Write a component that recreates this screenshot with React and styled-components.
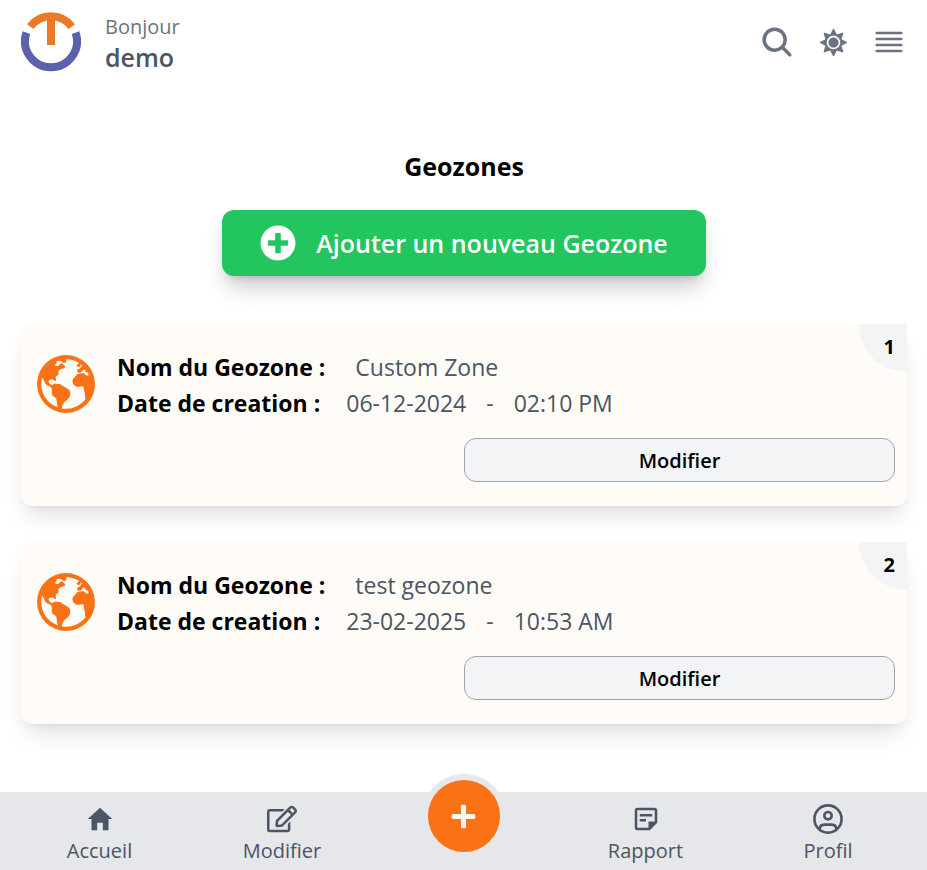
import React from "react";
import styled, { createGlobalStyle } from "styled-components";
import { IoEarth, IoSearch } from "react-icons/io5";
import { IoMdHome } from "react-icons/io";
import { FaSun, FaPlusCircle, FaPlus, FaRegEdit } from "react-icons/fa";
import { MdOutlineStickyNote2 } from "react-icons/md";

const GlobalStyle = createGlobalStyle`
  *, *::before, *::after { box-sizing: border-box; }
  body {
    margin: 0;
    background: #ffffff;
    color: #000000;
    font-family: "Segoe UI", "Open Sans", "Noto Sans", sans-serif;
  }
  button { font-family: inherit; cursor: pointer; }
  svg { display: block; flex: none; }
`;

const Page = styled.div`
  display: flex;
  flex-direction: column;
  min-height: 100vh;
`;

const Header = styled.header`
  display: flex;
  align-items: center;
  justify-content: space-between;
  height: 84px;
  padding: 0 22px 0 21px;
`;

const Brand = styled.div`
  display: flex;
  align-items: center;
  gap: 24px;
`;

const Greeting = styled.div`
  display: flex;
  flex-direction: column;
  padding-top: 2px;
  color: #6b7280;
  font-size: 20px;
  line-height: 28px;
`;

const UserName = styled.strong`
  color: #4b5563;
  font-size: 25px;
  font-weight: 600;
  line-height: 32px;
`;

const Actions = styled.div`
  display: flex;
  align-items: center;
  gap: 24px;
`;

const IconButton = styled.button`
  display: flex;
  align-items: center;
  justify-content: center;
  width: 32px;
  height: 36px;
  padding: 0;
  border: 0;
  background: none;
  color: #6b7280;
`;

const Main = styled.main`
  display: flex;
  flex: 1;
  flex-direction: column;
  align-items: center;
  padding: 64px 20px 24px 21px;
`;

const Title = styled.h1`
  margin: 0 0 26px;
  font-size: 25px;
  font-weight: 700;
  line-height: 36px;
`;

const AddButton = styled.button`
  display: flex;
  align-items: center;
  gap: 20px;
  height: 66px;
  margin-bottom: 48px;
  padding: 0 38px;
  border: 0;
  border-radius: 12px;
  background: #22c55e;
  box-shadow: 0 15px 22px -4px rgba(0, 0, 0, 0.2), 0 6px 9px -6px rgba(0, 0, 0, 0.2);
  color: #ffffff;
  font-size: 25px;
  font-weight: 600;
  line-height: 36px;
`;

const ZoneList = styled.ul`
  display: flex;
  flex-direction: column;
  gap: 36px;
  align-self: stretch;
  margin: 0;
  padding: 0;
  list-style: none;
`;

const ZoneCard = styled.li`
  position: relative;
  display: flex;
  align-items: flex-start;
  gap: 18px;
  padding: 25px 12px 24px;
  border-radius: 12px 0 12px 12px;
  background: #fffcf7;
  box-shadow: 0 15px 22px -4px rgba(0, 0, 0, 0.1), 0 6px 9px -6px rgba(0, 0, 0, 0.1);
`;

const ZoneIcon = styled.div`
  flex: none;
  padding-top: 2px;
  color: #f97316;
`;

const ZoneBody = styled.div`
  display: flex;
  flex: 1;
  flex-direction: column;
`;

const Field = styled.p`
  display: flex;
  align-items: baseline;
  gap: ${({ $gap }) => $gap}px;
  margin: 0;
  font-size: 23px;
  line-height: 36px;
`;

const Label = styled.span`
  font-weight: 700;
`;

const Value = styled.span`
  display: flex;
  gap: 20px;
  color: #4b5563;
`;

const EditButton = styled.button`
  align-self: flex-end;
  width: 431px;
  max-width: 100%;
  height: 44px;
  margin-top: 17px;
  padding: 2px 0 0;
  border: 1px solid #9ca3af;
  border-radius: 12px;
  background: #f3f4f6;
  color: #000000;
  font-size: 20px;
  font-weight: 600;
  line-height: 30px;
`;

const Rank = styled.span`
  position: absolute;
  top: 0;
  right: 0;
  width: 48px;
  height: 48px;
  padding: 5px 12px 0 0;
  border-bottom-left-radius: 48px;
  background: #f3f4f6;
  font-size: 20px;
  font-weight: 700;
  line-height: 36px;
  text-align: right;
`;

const BottomNav = styled.nav`
  display: grid;
  grid-template-columns: 199fr 166fr 197fr 167fr 198fr;
  height: 78px;
  background: #e5e7eb;
`;

const NavLink = styled.a`
  display: flex;
  flex-direction: column;
  align-items: center;
  padding-top: 9px;
  color: #4b5563;
  font-size: 20px;
  line-height: 28px;
  text-decoration: none;
`;

const NavIcon = styled.span`
  display: flex;
  align-items: center;
  height: 36px;
`;

const AddCell = styled.div`
  display: flex;
  justify-content: center;
`;

const RoundButton = styled.button`
  display: flex;
  align-items: center;
  justify-content: center;
  width: 84px;
  height: 84px;
  margin-top: -18px;
  padding: 0;
  border: 6px solid #e5e7eb;
  border-radius: 50%;
  background: #f97316;
  color: #ffffff;
`;

function Logo() {
  return (
    <svg width="60" height="60" viewBox="0 0 60 60" fill="none" aria-hidden="true">
      <path d="M9.2 14.6A26 26 0 0 1 50.8 14.6" stroke="#e87a28" strokeWidth="8" />
      <path d="M30 4V33" stroke="#e87a28" strokeWidth="8" />
      <path d="M5.5 20.6A26 26 0 1 0 54.5 20.6" stroke="#5b61ad" strokeWidth="8" />
    </svg>
  );
}

function MenuIcon() {
  return (
    <svg width="28" height="28" viewBox="0 0 28 28" stroke="currentColor" strokeWidth="2.7" strokeLinecap="round" aria-hidden="true">
      <path d="M1.8 5H26.2M1.8 11H26.2M1.8 17H26.2M1.8 23H26.2" />
    </svg>
  );
}

function ProfileIcon() {
  return (
    <svg width="30" height="30" viewBox="0 0 30 30" fill="none" stroke="currentColor" strokeWidth="2.6" aria-hidden="true">
      <circle cx="15" cy="15" r="13.6" />
      <circle cx="15" cy="11.7" r="3.7" />
      <path d="M6.6 25.4C6.6 21.8 8.8 20.6 11.4 20.6H18.6C21.2 20.6 23.4 21.8 23.4 25.4" />
    </svg>
  );
}

const zones = [
  { id: 1, name: "Custom Zone", date: "06-12-2024", time: "02:10 PM" },
  { id: 2, name: "test geozone", date: "23-02-2025", time: "10:53 AM" },
];

function Zone({ zone }) {
  return (
    <ZoneCard>
      <Rank>{zone.id}</Rank>
      <ZoneIcon><IoEarth size={66} /></ZoneIcon>
      <ZoneBody>
        <Field $gap={30}>
          <Label>Nom du Geozone :</Label>
          <Value>{zone.name}</Value>
        </Field>
        <Field $gap={26}>
          <Label>Date de creation :</Label>
          <Value>
            <span>{zone.date}</span>
            <span>-</span>
            <span>{zone.time}</span>
          </Value>
        </Field>
        <EditButton type="button">Modifier</EditButton>
      </ZoneBody>
    </ZoneCard>
  );
}

function NavItem({ href, icon, children }) {
  return (
    <NavLink href={href}>
      <NavIcon>{icon}</NavIcon>
      {children}
    </NavLink>
  );
}

export default function App() {
  return (
    <Page>
      <GlobalStyle />
      <Header>
        <Brand>
          <Logo />
          <Greeting>
            Bonjour
            <UserName>demo</UserName>
          </Greeting>
        </Brand>
        <Actions>
          <IconButton type="button" aria-label="Rechercher"><IoSearch size={36} /></IconButton>
          <IconButton type="button" aria-label="Thème"><FaSun size={27} /></IconButton>
          <IconButton type="button" aria-label="Menu"><MenuIcon /></IconButton>
        </Actions>
      </Header>
      <Main>
        <Title>Geozones</Title>
        <AddButton type="button">
          <FaPlusCircle size={36} />
          Ajouter un nouveau Geozone
        </AddButton>
        <ZoneList>
          {zones.map((zone) => <Zone key={zone.id} zone={zone} />)}
        </ZoneList>
      </Main>
      <BottomNav>
        <NavItem href="#accueil" icon={<IoMdHome size={30} />}>Accueil</NavItem>
        <NavItem href="#modifier" icon={<FaRegEdit size={30} />}>Modifier</NavItem>
        <AddCell>
          <RoundButton type="button" aria-label="Ajouter"><FaPlus size={27} /></RoundButton>
        </AddCell>
        <NavItem href="#rapport" icon={<MdOutlineStickyNote2 size={30} />}>Rapport</NavItem>
        <NavItem href="#profil" icon={<ProfileIcon />}>Profil</NavItem>
      </BottomNav>
    </Page>
  );
}
